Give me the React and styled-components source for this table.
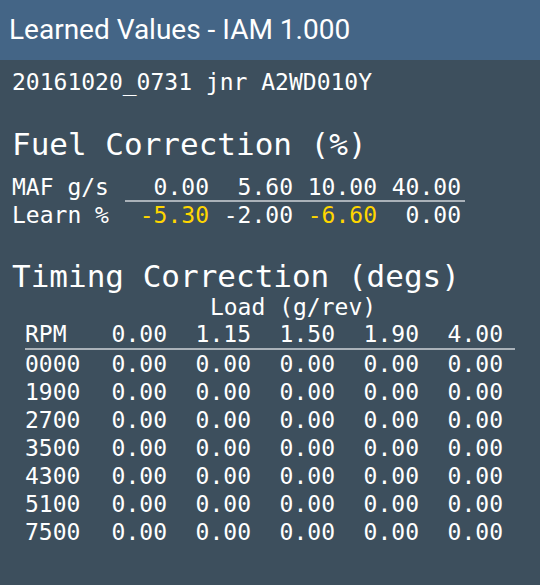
import React from 'react';
import styled, { createGlobalStyle } from 'styled-components';

const GlobalStyle = createGlobalStyle`
  html, body {
    margin: 0;
    padding: 0;
    background: #3d4f5d;
  }
`;

const mono = `"DejaVu Sans Mono", "Liberation Mono", monospace`;

const fuel = {
  maf: ['0.00', '5.60', '10.00', '40.00'],
  learn: [
    { v: '-5.30', hot: true },
    { v: '-2.00' },
    { v: '-6.60', hot: true },
    { v: '0.00' },
  ],
};

const loads = ['0.00', '1.15', '1.50', '1.90', '4.00'];
const rpms = ['0000', '1900', '2700', '3500', '4300', '5100', '7500'];

export default function App() {
  return (
    <Screen>
      <GlobalStyle />
      <AppBar>Learned Values - IAM 1.000</AppBar>
      <Content>
        <LogName>20161020_0731 jnr A2WD010Y</LogName>

        <SectionTitle $gap={30}>Fuel Correction (%)</SectionTitle>
        <FuelTable>
          <FuelRow>
            <RowLabel $w={113}>MAF g/s</RowLabel>
            <FuelValues $head>
              {fuel.maf.map((m) => (
                <Cell key={m}>{m}</Cell>
              ))}
            </FuelValues>
          </FuelRow>
          <FuelRow>
            <RowLabel $w={113}>Learn %</RowLabel>
            <FuelValues>
              {fuel.learn.map((l, i) => (
                <Cell key={i} $hot={l.hot}>{l.v}</Cell>
              ))}
            </FuelValues>
          </FuelRow>
        </FuelTable>

        <SectionTitle $gap={29}>Timing Correction (degs)</SectionTitle>
        <TimingTable>
          <AxisRow>
            <RowLabel $w={58} />
            <AxisTitle>Load (g/rev)</AxisTitle>
          </AxisRow>
          <TimingRow $head>
            <RowLabel $w={58}>RPM</RowLabel>
            {loads.map((l) => (
              <Cell key={l}>{l}</Cell>
            ))}
          </TimingRow>
          {rpms.map((r) => (
            <TimingRow key={r}>
              <RowLabel $w={58}>{r}</RowLabel>
              {loads.map((l) => (
                <Cell key={l}>0.00</Cell>
              ))}
            </TimingRow>
          ))}
        </TimingTable>
      </Content>
    </Screen>
  );
}

const Screen = styled.div`
  min-height: 585px;
  background: #3d4f5d;
  color: #ffffff;
`;

const AppBar = styled.div`
  height: 60px;
  line-height: 60px;
  padding-left: 9px;
  background: #446586;
  font-family: Roboto, "Noto Sans", sans-serif;
  font-size: 28px;
  color: #ffffff;
`;

const Content = styled.div`
  padding: 8px 12px 0 12px;
  font-family: ${mono};
  font-size: 23px;
`;

const LogName = styled.div`
  line-height: 28px;
  white-space: pre;
`;

const SectionTitle = styled.div`
  margin-top: ${(p) => p.$gap}px;
  font-size: 31px;
  line-height: 36px;
  white-space: pre;
`;

const FuelTable = styled.div`
  margin-top: 12px;
  display: flex;
  flex-direction: column;
`;

const FuelRow = styled.div`
  display: flex;
  line-height: 26px;

  & + & {
    line-height: 27px;
  }
`;

const RowLabel = styled.div`
  width: ${(p) => p.$w}px;
  flex: none;
  white-space: pre;
`;

const FuelValues = styled.div`
  display: flex;
  padding-right: 4px;
  border-bottom: ${(p) => (p.$head ? '2px solid #aab2b9' : 'none')};
`;

const Cell = styled.div`
  width: 84px;
  flex: none;
  text-align: right;
  color: ${(p) => (p.$hot ? '#ffd600' : '#ffffff')};
`;

const TimingTable = styled.div`
  margin-left: 13px;
  width: 490px;
  display: flex;
  flex-direction: column;
`;

const AxisRow = styled.div`
  display: flex;
  line-height: 27px;
  width: 478px;
`;

const AxisTitle = styled.div`
  flex: 1;
  text-align: center;
`;

const TimingRow = styled.div`
  display: flex;
  line-height: ${(p) => (p.$head ? 27 : 28)}px;
  border-bottom: ${(p) => (p.$head ? '2px solid #aab2b9' : 'none')};
`;
